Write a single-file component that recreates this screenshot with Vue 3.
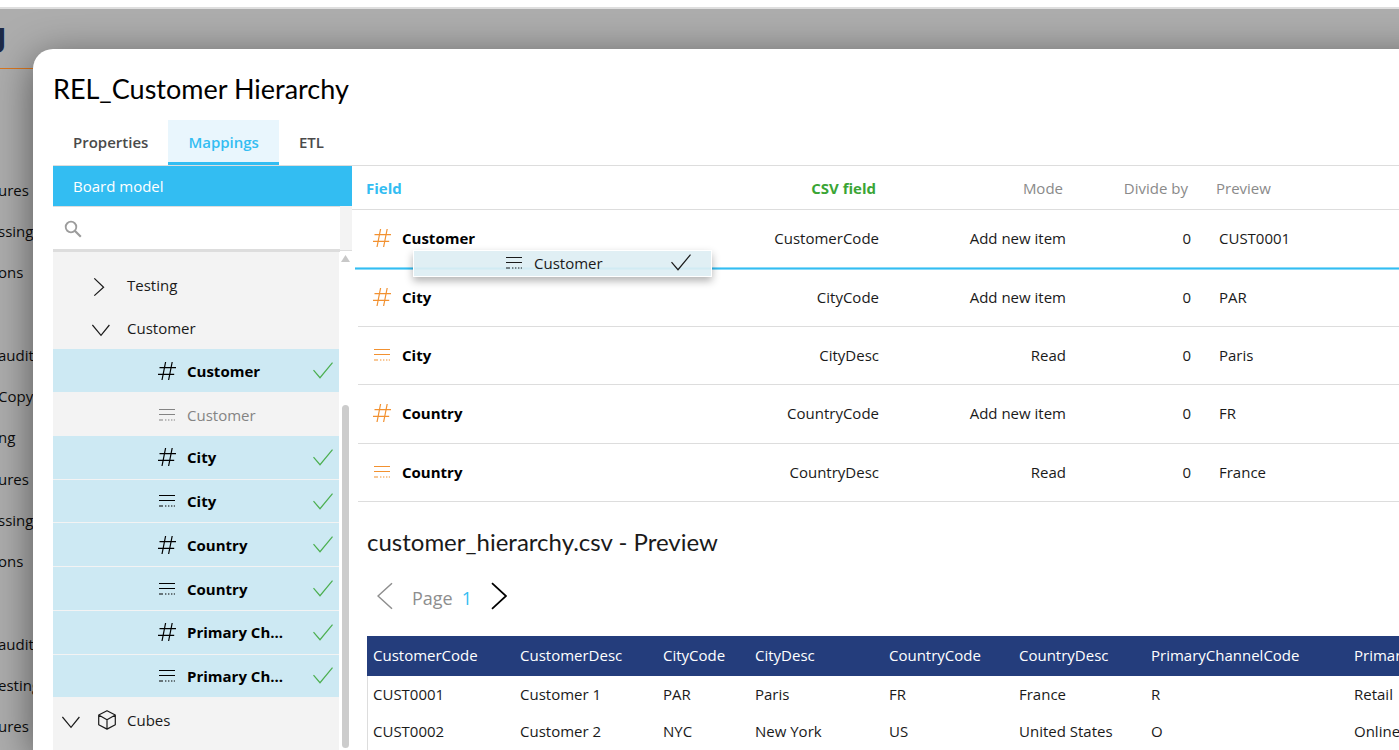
<script setup>
import { ref, h } from 'vue'

const HashIcon = () =>
  h('svg', { width: 18, height: 18, viewBox: '0 0 18 18', fill: 'none', stroke: 'currentColor', 'stroke-width': 1.2, 'aria-hidden': 'true' }, [
    h('path', { d: 'M7.6 0 4 18M14.2 0l-3.6 18M1.5 5.7H18M0 12.3h16.2' })
  ])
const LinesIcon = () =>
  h('svg', { width: 18, height: 18, viewBox: '0 0 18 18', fill: 'none', stroke: 'currentColor', 'stroke-width': 1.2, 'aria-hidden': 'true' }, [
    h('path', { d: 'M1 3.5h16M1 8.5h16M1 14h4M7 14h1.4M10 14h1.4M13 14h1.4M15.8 14H17' })
  ])
const CheckIcon = () =>
  h('svg', { width: 20, height: 17, viewBox: '0 0 20 17', fill: 'none', stroke: 'currentColor', 'stroke-width': 1.2, 'aria-hidden': 'true' }, [
    h('path', { d: 'M.5 8.2 7 15.7 19.5.6' })
  ])
const icons = { hash: HashIcon, lines: LinesIcon }

const search = ref('')
const activeTab = ref('Mappings')
const tabs = ['Properties', 'Mappings', 'ETL']

const pageRows = ['ures', 'ssing', 'ons', '', 'auditi', 'Copy', 'ng', 'ures', 'ssing', 'ons', '', 'auditi', 'esting', 'ures']

const tree = [
  { kind: 'closed', name: 'Testing' },
  { kind: 'open', name: 'Customer' },
  { kind: 'field', icon: 'hash', name: 'Customer', mapped: true },
  { kind: 'field', icon: 'lines', name: 'Customer', mapped: false },
  { kind: 'field', icon: 'hash', name: 'City', mapped: true },
  { kind: 'field', icon: 'lines', name: 'City', mapped: true },
  { kind: 'field', icon: 'hash', name: 'Country', mapped: true },
  { kind: 'field', icon: 'lines', name: 'Country', mapped: true },
  { kind: 'field', icon: 'hash', name: 'Primary Ch...', mapped: true },
  { kind: 'field', icon: 'lines', name: 'Primary Ch...', mapped: true },
  { kind: 'root', name: 'Cubes' }
]

const mappings = [
  { icon: 'hash', field: 'Customer', csv: 'CustomerCode', mode: 'Add new item', divide: 0, preview: 'CUST0001' },
  { icon: 'hash', field: 'City', csv: 'CityCode', mode: 'Add new item', divide: 0, preview: 'PAR' },
  { icon: 'lines', field: 'City', csv: 'CityDesc', mode: 'Read', divide: 0, preview: 'Paris' },
  { icon: 'hash', field: 'Country', csv: 'CountryCode', mode: 'Add new item', divide: 0, preview: 'FR' },
  { icon: 'lines', field: 'Country', csv: 'CountryDesc', mode: 'Read', divide: 0, preview: 'France' }
]

const csvColumns = ['CustomerCode', 'CustomerDesc', 'CityCode', 'CityDesc', 'CountryCode', 'CountryDesc', 'PrimaryChannelCode', 'PrimaryChannelDesc']
const csvRows = [
  ['CUST0001', 'Customer 1', 'PAR', 'Paris', 'FR', 'France', 'R', 'Retail'],
  ['CUST0002', 'Customer 2', 'NYC', 'New York', 'US', 'United States', 'O', 'Online']
]
</script>

<template>
  <div class="screen">
    <div class="topbar"></div>
    <div class="stage">
      <div class="page">
        <div class="page-title">g</div>
        <ul class="page-list">
          <li v-for="(t, i) in pageRows" :key="i">{{ t }}</li>
        </ul>
      </div>

      <section class="modal" role="dialog" aria-labelledby="dialog-title">
        <h1 id="dialog-title">REL_Customer Hierarchy</h1>
        <nav class="tabs" role="tablist">
          <button
            v-for="t in tabs" :key="t" type="button" role="tab"
            :aria-selected="t === activeTab" :class="{ active: t === activeTab }" @click="activeTab = t"
          >{{ t }}</button>
        </nav>

        <div class="body">
          <aside class="model">
            <h2>Board model</h2>
            <div class="search-row">
              <label class="search">
                <svg width="18" height="18" viewBox="0 0 18 18" fill="none" stroke="#9c9c9c" aria-hidden="true">
                  <circle cx="7" cy="7" r="5.3" stroke-width="1.8" />
                  <path d="M10.8 10.8 16.8 16.8" stroke-width="2.2" />
                </svg>
                <input v-model="search" type="search" aria-label="Search the board model">
              </label>
              <span class="search-gutter"></span>
            </div>
            <div class="tree-area">
              <ul class="tree">
                <li v-for="(n, i) in tree" :key="i" :class="[n.kind, { mapped: n.mapped }]">
                  <button v-if="n.kind !== 'field'" type="button" class="node">
                    <svg v-if="n.kind === 'closed'" class="chevron" width="18" height="18" viewBox="0 0 18 18" fill="none" stroke="currentColor" stroke-width="1.2" aria-hidden="true"><path d="M2.3.4 11.6 9.2 2.3 17.6" /></svg>
                    <svg v-else class="chevron" width="18" height="18" viewBox="0 0 18 18" fill="none" stroke="currentColor" stroke-width="1.2" aria-hidden="true"><path d="M.4 4 9 14.3 17.4 4" /></svg>
                    <svg v-if="n.kind === 'root'" class="cube" width="18" height="20" viewBox="0 0 18 20" fill="none" stroke="currentColor" stroke-width="1.2" stroke-linejoin="round" aria-hidden="true"><path d="M9 .7 17.3 5v9.7L9 19.1.7 14.7V5zM.7 5 9 9.8 17.3 5M9 9.8v9.3" /></svg>
                    <span>{{ n.name }}</span>
                  </button>
                  <template v-else>
                    <component :is="icons[n.icon]" />
                    <span class="name">{{ n.name }}</span>
                    <CheckIcon v-if="n.mapped" class="check" />
                  </template>
                </li>
              </ul>
              <div class="scrollbar">
                <svg width="9" height="7" viewBox="0 0 9 7" fill="#c8c8c8" aria-hidden="true"><path d="M4.5 0 9 7H0z" /></svg>
                <span class="thumb"></span>
              </div>
            </div>
          </aside>

          <main class="content">
            <div class="mapping">
              <table class="map-table">
                <colgroup><col><col class="c-csv"><col class="c-mode"><col class="c-div"><col class="c-prev"></colgroup>
                <thead>
                  <tr>
                    <th class="h-field">Field</th>
                    <th class="h-csv num">CSV field</th>
                    <th class="num">Mode</th>
                    <th class="num">Divide by</th>
                    <th class="prev">Preview</th>
                  </tr>
                </thead>
                <tbody>
                  <tr v-for="(m, i) in mappings" :key="i">
                    <td><div class="field"><component :is="icons[m.icon]" /><b>{{ m.field }}</b></div></td>
                    <td class="num">{{ m.csv }}</td>
                    <td class="num">{{ m.mode }}</td>
                    <td class="num">{{ m.divide }}</td>
                    <td class="prev">{{ m.preview }}</td>
                  </tr>
                </tbody>
              </table>
              <div class="drop-line"></div>
              <div class="ghost">
                <LinesIcon /><span class="name">Customer</span><CheckIcon class="check" />
              </div>
            </div>

            <div class="preview">
              <h2>customer_hierarchy.csv - Preview</h2>
              <div class="pager">
                <button type="button" class="prev-page" aria-label="Previous page">
                  <svg width="16" height="28" viewBox="0 0 16 28" fill="none" stroke="currentColor" stroke-width="1.5" aria-hidden="true"><path d="M15 1.2 1 14l14 12.8" /></svg>
                </button>
                <span class="page-word">Page</span>
                <span class="page-no">1</span>
                <button type="button" class="next-page" aria-label="Next page">
                  <svg width="16" height="28" viewBox="0 0 16 28" fill="none" stroke="currentColor" stroke-width="1.8" aria-hidden="true"><path d="M1 1.2 15 14 1 26.8" /></svg>
                </button>
              </div>
              <table class="csv-table">
                <colgroup><col class="w1"><col class="w2"><col class="w3"><col class="w4"><col class="w5"><col class="w6"><col class="w7"><col></colgroup>
                <thead>
                  <tr><th v-for="c in csvColumns" :key="c">{{ c }}</th></tr>
                </thead>
                <tbody>
                  <tr v-for="r in csvRows" :key="r[0]"><td v-for="(c, i) in r" :key="i">{{ c }}</td></tr>
                </tbody>
              </table>
            </div>
          </main>
        </div>
      </section>
    </div>
  </div>
</template>

<style>
body { margin: 0; overflow: hidden; }
</style>

<style scoped>
* { box-sizing: border-box; }
.screen {
  min-height: 100vh;
  display: flex;
  flex-direction: column;
  font: 15px/20px "Open Sans", "Noto Sans", sans-serif;
  color: #1a1a1a;
  background: #fff;
}
h1, h2, ul { margin: 0; padding: 0; font-weight: 400; list-style: none; }
button { font: inherit; color: inherit; background: none; border: 0; padding: 0; cursor: pointer; }
svg { display: block; flex: none; }

.topbar { height: 9px; border-bottom: 2px solid #dedede; }
.stage {
  flex: 1;
  display: grid;
  grid-template-columns: 33px minmax(0, 1fr);
  background: #adadad;
  overflow: hidden;
}
.page { display: flex; flex-direction: column; overflow: hidden; white-space: nowrap; color: #0c0c0c; padding-bottom: 3px; }
.page-title {
  height: 59px;
  width: 6px;
  display: flex;
  justify-content: flex-end;
  font: 700 32px/52px "Inter", sans-serif;
  color: #1d2a47;
}
.page-list { flex: 1; display: flex; flex-direction: column; border-top: 1px solid #d8761f; padding-top: 100px; margin-left: -2px; }
.page-list li { flex: 1; display: flex; align-items: center; }

.modal {
  position: relative;
  margin: 40px -40px 0 0;
  padding: 0 40px 0 20px;
  display: flex;
  flex-direction: column;
  background: #fff;
  border-radius: 20px 0 0 0;
  box-shadow: 0 8px 40px rgba(0, 0, 0, .5);
}
h1 { font: 400 27px/32px "Lato", sans-serif; color: #000; padding: 24px 0 15px; }
.tabs { display: flex; border-bottom: 1px solid #ddd; }
.tabs button { height: 45px; padding: 1px 20px 0; font-weight: 600; color: #4a4a4a; border-bottom: 3px solid transparent; }
.tabs .active { background: #e9f6fd; color: #33bdf2; border-bottom-color: #33bdf2; }

.body { flex: 1; display: flex; }
.model { width: 299px; flex: none; display: flex; flex-direction: column; }
.model h2 { height: 40px; font-size: 15px; line-height: 40px; padding-left: 20px; color: #fff; background: #33bdf2; }
.search-row { display: flex; height: 46px; }
.search { flex: 1; display: flex; align-items: center; gap: 8px; padding: 2px 0 0 11px; border-top: 1px solid #ddd; border-bottom: 3px solid #ddd; }
.search input { flex: 1; min-width: 0; font: inherit; border: 0; outline: 0; background: none; padding: 0; }
.search-gutter { width: 12px; background: #f3f3f3; height: 45px; border-bottom: 1px solid #ddd; }
.tree-area { flex: 1; display: flex; }
.tree { flex: 1; display: flex; flex-direction: column; background: #f3f3f3; padding: 12px 0 9px; }
.tree li { flex: 1; min-height: 40px; display: flex; align-items: center; }
.node { display: flex; align-items: center; padding-left: 39px; gap: 17px; }
.root .node { padding-left: 9px; }
.node .chevron { margin-top: 4px; }
.root .cube { margin: 0 -6px 0 1px; }
.tree .field { padding: 0 6px 0 105px; gap: 11px; color: #848484; }
.tree .mapped { background: #cde9f3; border-bottom: 1px solid #f3f3f3; color: #000; font-weight: 700; }
.name { flex: 1; }
.tree .check { color: #4caf50; }
.scrollbar { width: 13px; display: flex; flex-direction: column; align-items: center; padding: 3px 0 2px; }
.thumb { width: 7px; border-radius: 4px; background: #ccc; flex: 1; margin-top: 143px; }

.content { flex: 1; min-width: 0; }
table { border-spacing: 0; table-layout: fixed; width: 100%; }
th, td { padding: 0 0 2px; text-align: left; font-weight: 400; white-space: nowrap; }
.mapping { position: relative; padding-left: 6px; }
.c-csv { width: 194px; }
.c-mode { width: 187px; }
.c-div { width: 125px; }
.c-prev { width: 193px; }
.map-table th { position: relative; height: 44px; padding-bottom: 0; color: #8a8a8a; border-bottom: 1px solid #ddd; }
.map-table .h-field { padding-left: 8px; font-weight: 700; color: #33bdf2; }
.h-field::before { content: ""; position: absolute; left: -6px; bottom: -1px; width: 6px; height: 1px; background: #ddd; }
.map-table .h-csv { font-weight: 700; color: #3aa535; }
.map-table th.num { text-align: right; padding-right: 18px; }
.map-table th.prev { padding-left: 10px; }
.map-table td { height: 58px; border-bottom: 1px solid #ddd; }
.map-table tr:nth-child(3n + 1) td { height: 59px; }
.map-table td.num { text-align: right; padding-right: 15px; }
.map-table td.prev { padding-left: 13px; }
.map-table .field { display: flex; align-items: center; gap: 11px; padding-left: 15px; color: #f29130; }
.field b { color: #000; }
.drop-line { position: absolute; left: 3px; right: 0; top: 101px; height: 3px; background: #33bdf2; border: solid #8adaf8; border-width: 1px 0; }
.ghost {
  position: absolute;
  left: 61px;
  top: 84px;
  width: 299px;
  height: 27px;
  display: flex;
  align-items: center;
  gap: 11px;
  padding: 0 20px 2px 91px;
  border: 1px solid #fff;
  background: rgba(222, 238, 243, .93);
  box-shadow: 0 4px 8px rgba(0, 0, 0, .3);
}

.preview { padding: 24px 0 0 15px; }
.preview h2 { font: 400 24px/32px "Lato", sans-serif; }
.pager { display: flex; align-items: center; height: 32px; margin: 22px 0 24px 10px; font-size: 18px; line-height: 24px; }
.prev-page, .page-word { color: #8e8e8e; }
.page-word { margin: 4px 9px 0 19px; }
.page-no { margin: 4px 19px 0 0; color: #33bdf2; }
.next-page { color: #000; }
.w1 { width: 147px; }
.w2 { width: 143px; }
.w3 { width: 92px; }
.w4 { width: 134px; }
.w5 { width: 130px; }
.w6 { width: 132px; }
.w7 { width: 203px; }
.csv-table th { height: 40px; padding-left: 6px; background: #243d7c; color: #fff; overflow: hidden; }
.csv-table td { height: 37px; padding-left: 6px; }
.csv-table td:first-child { border-left: 1px solid #ddd; padding-left: 5px; }
</style>
